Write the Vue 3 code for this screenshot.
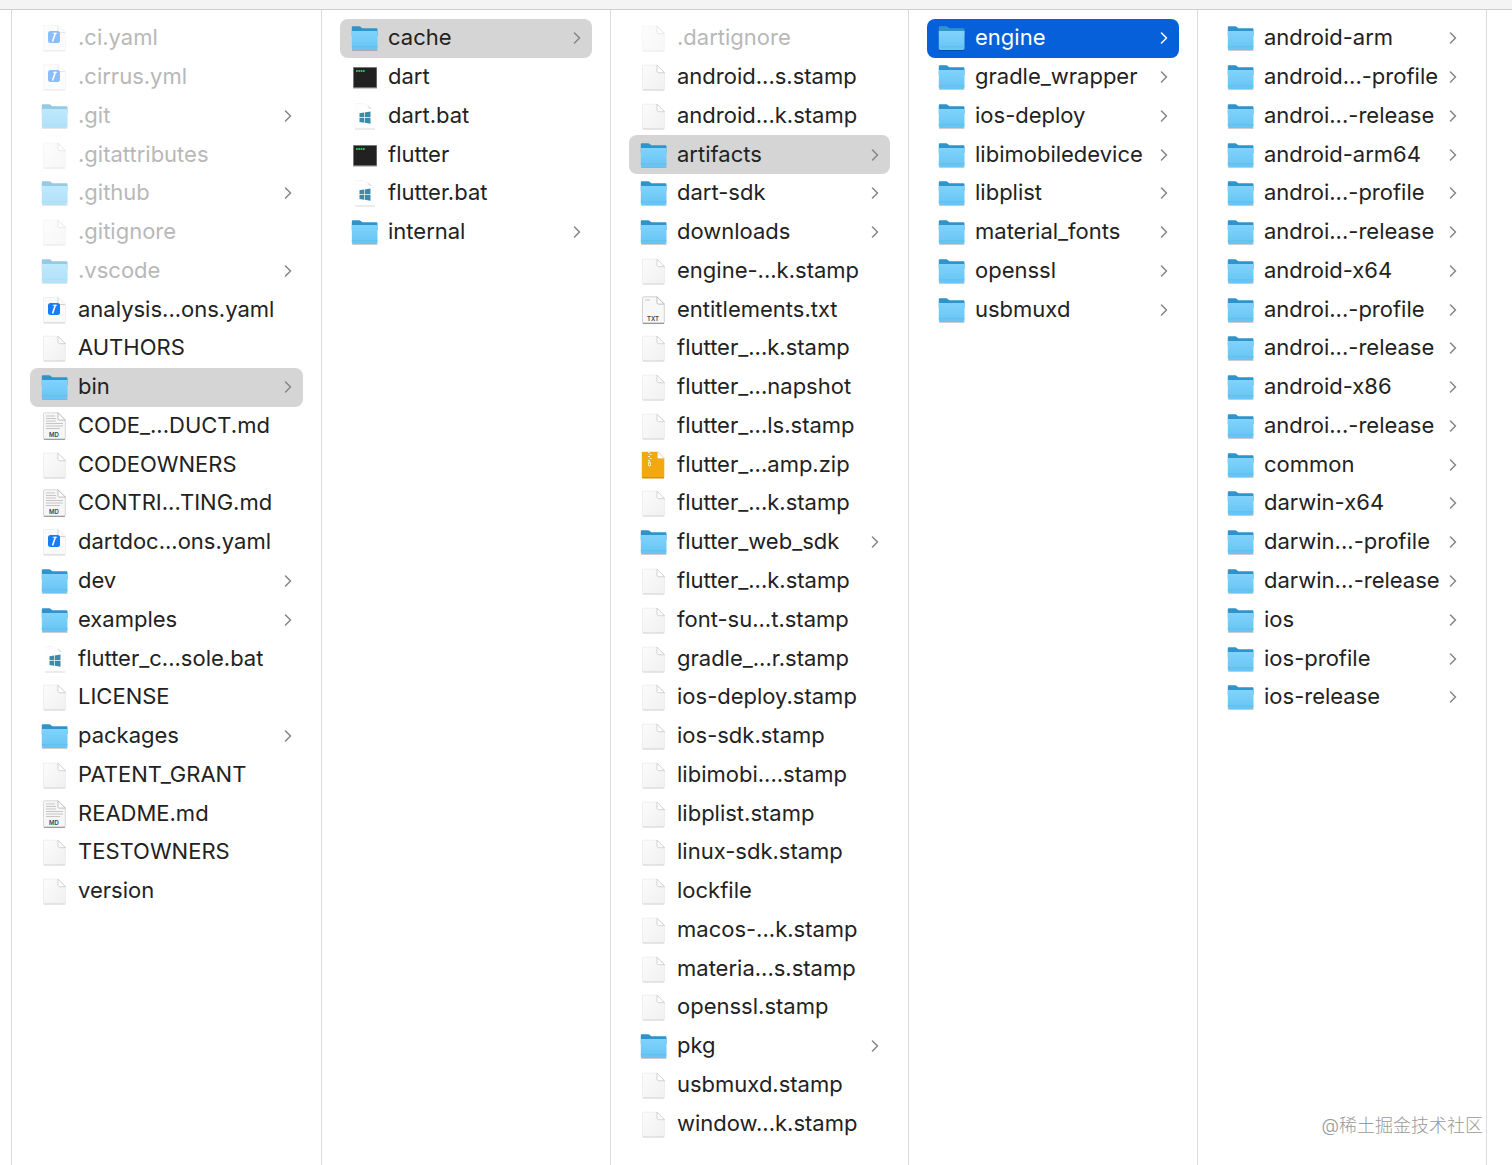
<template>
    <div class="finder">
        <svg class="icon-defs" aria-hidden="true">
            <defs>
                <linearGradient id="folder-front" x1="0" y1="0" x2="0" y2="1">
                    <stop offset="0" stop-color="#80d3fc" />
                    <stop offset="1" stop-color="#66c4f3" />
                </linearGradient>
                <linearGradient id="paper" x1="0" y1="0" x2="1" y2="1">
                    <stop offset="0" stop-color="#fcfcfc" />
                    <stop offset="1" stop-color="#f0f0f0" />
                </linearGradient>
            </defs>

            <symbol id="icon-folder" viewBox="0 0 28 28">
                <path d="M1 25.5h25.5v.9a.8.8 0 0 1-.8.6H1.8a.8.8 0 0 1-.8-.6z" fill="#000" opacity=".2" />
                <path d="M.8 3.600c0-.8.5-1.300 1.300-1.300h6c.7 0 1.200.2 1.700.6l1.200 1c.4.3.8.4 1.300.4h12.900c.8 0 1.300.5 1.300 1.300V12H.8z" fill="#2f94cb" />
                <path d="M.8 7h25.700v17.600c0 .9-.6 1.400-1.400 1.400H2.200C1.300 26 .8 25.500.8 24.600z" fill="url(#folder-front)" />
                <path d="M.8 22.700h25.700" stroke="#5dbbe9" stroke-width=".7" />
            </symbol>

            <symbol id="icon-file" viewBox="0 0 28 28">
                <path d="M2.500 2.200h14.500l7.500 7.500v16.300c0 .6-.4 1-1 1h-20c-.6 0-1-.4-1-1z" fill="url(#paper)" stroke="#ebebeb" stroke-width=".8" />
                <path d="M2.800 27h21.400" stroke="#cecece" stroke-width=".8" />
                <path d="M17 2.200v6c0 .9.600 1.500 1.500 1.500h6z" fill="#fff" stroke="#c8c8c8" stroke-width=".8" />
            </symbol>

            <symbol id="icon-yaml" viewBox="0 0 28 28">
                <path d="M2.500 1.500h15l7 6.500v18c0 .6-.4 1-1 1h-20c-.6 0-1-.4-1-1z" fill="#fafafa" stroke="#ececec" stroke-width=".8" />
                <path d="M2.800 26.800h21.400" stroke="#cdcdcd" stroke-width=".8" />
                <path d="M17 2v5.500c0 .6.300 1 1 1h6" fill="none" stroke="#c8c8c8" stroke-width=".8" />
                <rect x="7" y="7" width="12" height="12" rx="2.500" fill="#167efb" />
                <path d="M14.500 8.800l-3 8.800" stroke="#fff" stroke-width="1.600" />
                <path d="M11.800 9.300h4.200" stroke="#fff" stroke-width=".9" />
            </symbol>

            <symbol id="icon-md" viewBox="0 0 28 28">
                <path d="M3.500.8h13.500l7.300 7.300v18.200c0 .6-.4 1-1 1H3.500c-.6 0-1-.4-1-1V1.800c0-.6.400-1 1-1z" fill="#f6f6f6" stroke="#d0d0d0" stroke-width=".8" />
                <path d="M2.900 27.300h21.200" stroke="#8e8e8e" stroke-width="1" />
                <path d="M5 4h9M5 6.500h10M5 9h10M5 11.500h17M5 14h17M5 16.500h14" stroke="#c6c6c6" stroke-width="1" />
                <path d="M17 .8v6c0 .8.500 1.300 1.300 1.300h6z" fill="#fff" stroke="#b0b0b0" stroke-width=".8" />
            </symbol>

            <symbol id="icon-txt" viewBox="0 0 28 28">
                <path d="M3.500.8h13.500l7.300 7.300v18.200c0 .6-.4 1-1 1H3.500c-.6 0-1-.4-1-1V1.800c0-.6.400-1 1-1z" fill="#f8f8f8" stroke="#c8c8c8" stroke-width=".8" />
                <path d="M2.900 27.300h21.200" stroke="#858585" stroke-width="1" />
                <path d="M5 4h5" stroke="#c6c6c6" stroke-width="1" />
                <path d="M17 .8v6c0 .8.500 1.300 1.300 1.300h6z" fill="#fff" stroke="#b0b0b0" stroke-width=".8" />
            </symbol>

            <symbol id="icon-zip" viewBox="0 0 28 28">
                <path d="M3 .8h14.500l6.800 6.800v18.400c0 .8-.5 1.200-1.200 1.200H3c-.7 0-1.200-.4-1.200-1.200V2C1.800 1.300 2.300.8 3 .8z" fill="#f3a812" />
                <path d="M2.200 26.900h21.800" stroke="#c58108" stroke-width=".9" />
                <path d="M17.500.8v5.500c0 .8.500 1.300 1.300 1.300h5.500z" fill="#fff" stroke="#d8c9a4" stroke-width=".7" />
                <path d="M8 1.500h2M9.500 3.500h2M8 5.500h2M9.500 7.500h2M8 9.500h2" stroke="#fff0c9" stroke-width="1.200" />
                <rect x="8" y="10.500" width="3" height="5" rx="1.400" fill="#ffe9b4" />
                <path d="M9.500 12.500v1.500" stroke="#c98a13" stroke-width=".8" />
            </symbol>

            <symbol id="icon-exec" viewBox="0 0 28 28">
                <path d="M2 25.300h24" stroke="#000" stroke-width="1" opacity=".25" />
                <rect x="2" y="4" width="24" height="21" fill="#8f8f8f" />
                <rect x="2.800" y="4.800" width="22.600" height="19.500" fill="#212121" />
                <path d="M5 8h9" stroke="#33b555" stroke-width="1.800" stroke-dasharray="1.800 .5" />
            </symbol>

            <symbol id="icon-bat" viewBox="0 0 28 28">
                <path d="M3 1.500h9c5 .5 5.500 3.500 6 5 2 .3 4.500 1 5.500 3.500v16.500H3z" fill="#fefefe" />
                <path d="M11 1.500c3.500.3 6.500 2.500 6.800 5 3 0 4.700 1 5.700 3.300C21 6 16 2.500 11 1.500z" fill="#dcdcdc" />
                <path d="M4 1.700h8" stroke="#efefef" stroke-width=".8" />
                <path d="M4 27h20" stroke="#cfcfcf" stroke-width=".8" />
                <path d="M8.500 11.300l4.500-.7v4.700H8.500zM13.700 10.500l5.800-.9v5.700h-5.800zM8.500 16H13v4.700l-4.500-.7zM13.700 16h5.800v5.700l-5.800-.9z" fill="#3b89ab" />
            </symbol>

            <symbol id="icon-chevron" viewBox="0 0 8 12">
                <path d="M1.500 1l5 5-5 5" fill="none" stroke="currentColor" stroke-width="1.500" stroke-linecap="round" stroke-linejoin="round" />
            </symbol>
        </svg>

        <header class="toolbar-edge"></header>

        <main class="browser">
            <ul v-for="(column, index) in columns" :key="index" class="column">
                <li v-for="(entry, row) in column" :key="row" class="cell">
                    <button
                        type="button"
                        class="entry"
                        :class="{
                            hidden: entry.name.startsWith('.'),
                            selected: selection[index] === row,
                            active: selection[index] === row && index === activeColumn,
                        }"
                        @click="select(index, row)"
                    >
                        <svg class="icon" viewBox="0 0 28 28" aria-hidden="true">
                            <use :href="`#icon-${entry.kind}`" />
                            <text
                                v-if="DOC_LABELS[entry.kind]"
                                x="13"
                                y="25"
                                class="doc-label"
                            >{{ DOC_LABELS[entry.kind] }}</text>
                        </svg>
                        <span class="name">{{ entry.name }}</span>
                        <svg v-if="entry.kind === 'folder'" class="chevron" aria-hidden="true">
                            <use href="#icon-chevron" />
                        </svg>
                    </button>
                </li>
            </ul>
        </main>

        <span class="watermark">@稀土掘金技术社区</span>
    </div>
</template>

<script setup>
import { reactive, ref } from 'vue'

const EXTENSIONS = {
    yaml: 'yaml',
    yml: 'yaml',
    md: 'md',
    txt: 'txt',
    zip: 'zip',
    bat: 'bat',
}

const DOC_LABELS = { md: 'MD', txt: 'TXT' }

// A trailing slash marks a folder, a trailing star an executable.
function parse(label) {
    if (label.endsWith('/')) {
        return { name: label.slice(0, -1), kind: 'folder' }
    }
    if (label.endsWith('*')) {
        return { name: label.slice(0, -1), kind: 'exec' }
    }
    return { name: label, kind: EXTENSIONS[label.split('.').pop()] ?? 'file' }
}

const columns = [
    [
        '.ci.yaml',
        '.cirrus.yml',
        '.git/',
        '.gitattributes',
        '.github/',
        '.gitignore',
        '.vscode/',
        'analysis...ons.yaml',
        'AUTHORS',
        'bin/',
        'CODE_...DUCT.md',
        'CODEOWNERS',
        'CONTRI...TING.md',
        'dartdoc...ons.yaml',
        'dev/',
        'examples/',
        'flutter_c...sole.bat',
        'LICENSE',
        'packages/',
        'PATENT_GRANT',
        'README.md',
        'TESTOWNERS',
        'version',
    ],
    ['cache/', 'dart*', 'dart.bat', 'flutter*', 'flutter.bat', 'internal/'],
    [
        '.dartignore',
        'android...s.stamp',
        'android...k.stamp',
        'artifacts/',
        'dart-sdk/',
        'downloads/',
        'engine-...k.stamp',
        'entitlements.txt',
        'flutter_...k.stamp',
        'flutter_...napshot',
        'flutter_...ls.stamp',
        'flutter_...amp.zip',
        'flutter_...k.stamp',
        'flutter_web_sdk/',
        'flutter_...k.stamp',
        'font-su...t.stamp',
        'gradle_...r.stamp',
        'ios-deploy.stamp',
        'ios-sdk.stamp',
        'libimobi....stamp',
        'libplist.stamp',
        'linux-sdk.stamp',
        'lockfile',
        'macos-...k.stamp',
        'materia...s.stamp',
        'openssl.stamp',
        'pkg/',
        'usbmuxd.stamp',
        'window...k.stamp',
    ],
    [
        'engine/',
        'gradle_wrapper/',
        'ios-deploy/',
        'libimobiledevice/',
        'libplist/',
        'material_fonts/',
        'openssl/',
        'usbmuxd/',
    ],
    [
        'android-arm/',
        'android...-profile/',
        'androi...-release/',
        'android-arm64/',
        'androi...-profile/',
        'androi...-release/',
        'android-x64/',
        'androi...-profile/',
        'androi...-release/',
        'android-x86/',
        'androi...-release/',
        'common/',
        'darwin-x64/',
        'darwin...-profile/',
        'darwin...-release/',
        'ios/',
        'ios-profile/',
        'ios-release/',
    ],
].map((column) => column.map(parse))

const selection = reactive([9, 0, 3, 0, -1])
const activeColumn = ref(3)

function select(column, row) {
    selection[column] = row
    activeColumn.value = column
}
</script>

<style>
body {
    margin: 0;
    background: #fff;
}
</style>

<style scoped>
.finder {
    position: relative;
    display: flex;
    flex-direction: column;
    min-height: 100vh;
    font-family: Inter, "Liberation Sans", "Noto Sans CJK SC", sans-serif;
    color: #222;
}

.icon-defs {
    position: absolute;
    width: 0;
    height: 0;
}

.doc-label {
    font-size: 6px;
    font-weight: 600;
    fill: #444;
    text-anchor: middle;
}

.toolbar-edge {
    height: 9px;
    background: #f4f4f4;
    border-bottom: 1px solid #cfcfcf;
}

.browser {
    flex: 1;
    display: grid;
    grid-template-columns: 310fr 289fr 298fr 289fr 289fr;
    margin: 0 25px 0 11px;
    border-left: 1px solid #dcdcdc;
}

.column {
    display: grid;
    grid-template-rows: repeat(29, minmax(38px, 1fr));
    min-width: 0;
    margin: 0;
    padding: 9px 18px 22px;
    border-right: 1px solid #dcdcdc;
    list-style: none;
}

.cell {
    display: flex;
    min-width: 0;
}

.entry {
    flex: 1;
    display: flex;
    align-items: center;
    gap: 9px;
    min-width: 0;
    padding: 0 11px;
    border: 0;
    border-radius: 8px;
    background: transparent;
    color: inherit;
    font-family: inherit;
    font-size: 22px;
    line-height: 28px;
    text-align: left;
}

.name {
    flex: 1;
    min-width: 0;
    padding-bottom: 2px;
    white-space: nowrap;
}

.icon {
    flex: none;
    width: 28px;
    height: 28px;
}

.chevron {
    flex: none;
    width: 8px;
    height: 12px;
    color: #858585;
}

.hidden .name {
    color: #b8b8b8;
}

.hidden .icon {
    opacity: 0.5;
}

.selected {
    background: #d5d5d5;
}

.active {
    background: #0560d9;
    color: #fff;
}

.active .chevron {
    color: #fff;
}

.watermark {
    position: absolute;
    right: 29px;
    bottom: 25px;
    font-size: 18px;
    font-weight: 300;
    line-height: 28px;
    color: #999;
}
</style>
